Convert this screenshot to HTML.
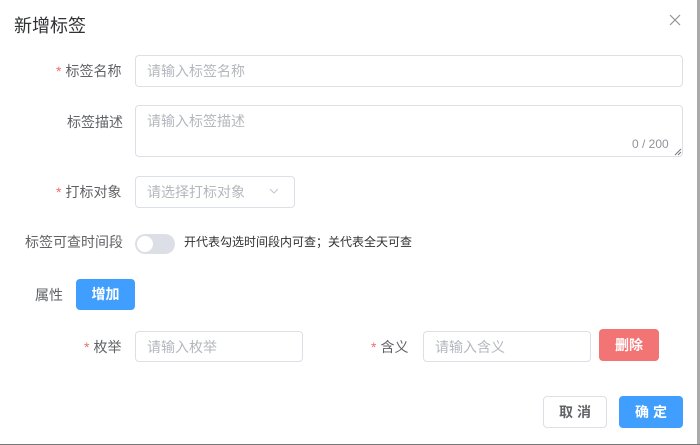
<!DOCTYPE html><html><head><meta charset="utf-8"><style>
*{box-sizing:border-box;margin:0;padding:0}
body{width:700px;height:445px;background:#fff;font-family:"Liberation Sans","Noto Sans CJK SC",sans-serif;position:relative;overflow:hidden;color:#606266;font-size:14px}
.a{position:absolute}
.in{position:absolute;border:1px solid #dcdfe6;border-radius:4px;color:#b4b7bd;font-size:14px;padding-left:11px;line-height:30px;height:32px}
.lb{position:absolute;font-size:14px;color:#606266;line-height:20px}
.st{color:#f56c6c;margin-right:4px}
.btn{position:absolute;border-radius:4px;color:#fff;font-size:14px;text-align:center;font-weight:bold}
</style></head><body>
<div class="a" style="right:0;top:0;width:3px;height:445px;background:#aaa"></div>
<div class="a" style="left:0;bottom:0;width:700px;height:1px;background:#777"></div>
<div class="a" style="left:14px;top:14px;font-size:18px;color:#303133;line-height:24px">新增标签</div>
<svg class="a" style="left:669px;top:14px" width="12" height="12"><path d="M1 1L11 11M11 1L1 11" stroke="#909399" stroke-width="1.2"/></svg>
<div class="lb" style="left:56px;top:61px"><span class="st">*</span>标签名称</div>
<div class="in" style="left:135px;top:55px;width:548px">请输入标签名称</div>
<div class="lb" style="left:67px;top:112px">标签描述</div>
<div class="in" style="left:135px;top:105px;width:548px;height:52px;line-height:20px;padding-top:5px">请输入标签描述</div>
<div class="a" style="left:632px;top:137px;font-size:12px;color:#909399">0 / 200</div>
<svg class="a" style="left:674px;top:148px" width="8" height="8"><path d="M1 7L7 1M4 7L7 4" stroke="#777"/></svg>
<div class="lb" style="left:56px;top:182px"><span class="st">*</span>打标对象</div>
<div class="in" style="left:135px;top:176px;width:160px;height:32px">请选择打标对象</div>
<svg class="a" style="left:269px;top:188px" width="10" height="7"><path d="M1 1L5 5L9 1" stroke="#c0c4cc" fill="none"/></svg>
<div class="lb" style="left:25px;top:232px">标签可查时间段</div>
<div class="a" style="left:135px;top:234px;width:40px;height:20px;border-radius:10px;background:#dcdfe6"></div>
<div class="a" style="left:137px;top:236px;width:16px;height:16px;border-radius:8px;background:#fff"></div>
<div class="a" style="left:184px;top:234px;font-size:12px;color:#303133;line-height:16px">开代表勾选时间段内可查；关代表全天可查</div>
<div class="lb" style="left:35px;top:285px">属性</div>
<div class="btn" style="left:76px;top:279px;width:59px;height:31px;line-height:31px;background:#409eff">增加</div>
<div class="lb" style="left:84px;top:337px"><span class="st">*</span>枚举</div>
<div class="in" style="left:135px;top:331px;width:168px;height:31px">请输入枚举</div>
<div class="lb" style="left:371px;top:337px"><span class="st">*</span>含义</div>
<div class="in" style="left:423px;top:331px;width:168px;height:31px">请输入含义</div>
<div class="btn" style="left:599px;top:329px;width:60px;height:32px;line-height:32px;background:#f37474">删除</div>
<div class="btn" style="left:543px;top:396px;width:64px;height:32px;line-height:30px;border:1px solid #dcdfe6;color:#606266;letter-spacing:4px;text-indent:4px">取消</div>
<div class="btn" style="left:619px;top:396px;width:64px;height:32px;line-height:32px;background:#409eff;letter-spacing:4px;text-indent:4px">确定</div>
</body></html>
